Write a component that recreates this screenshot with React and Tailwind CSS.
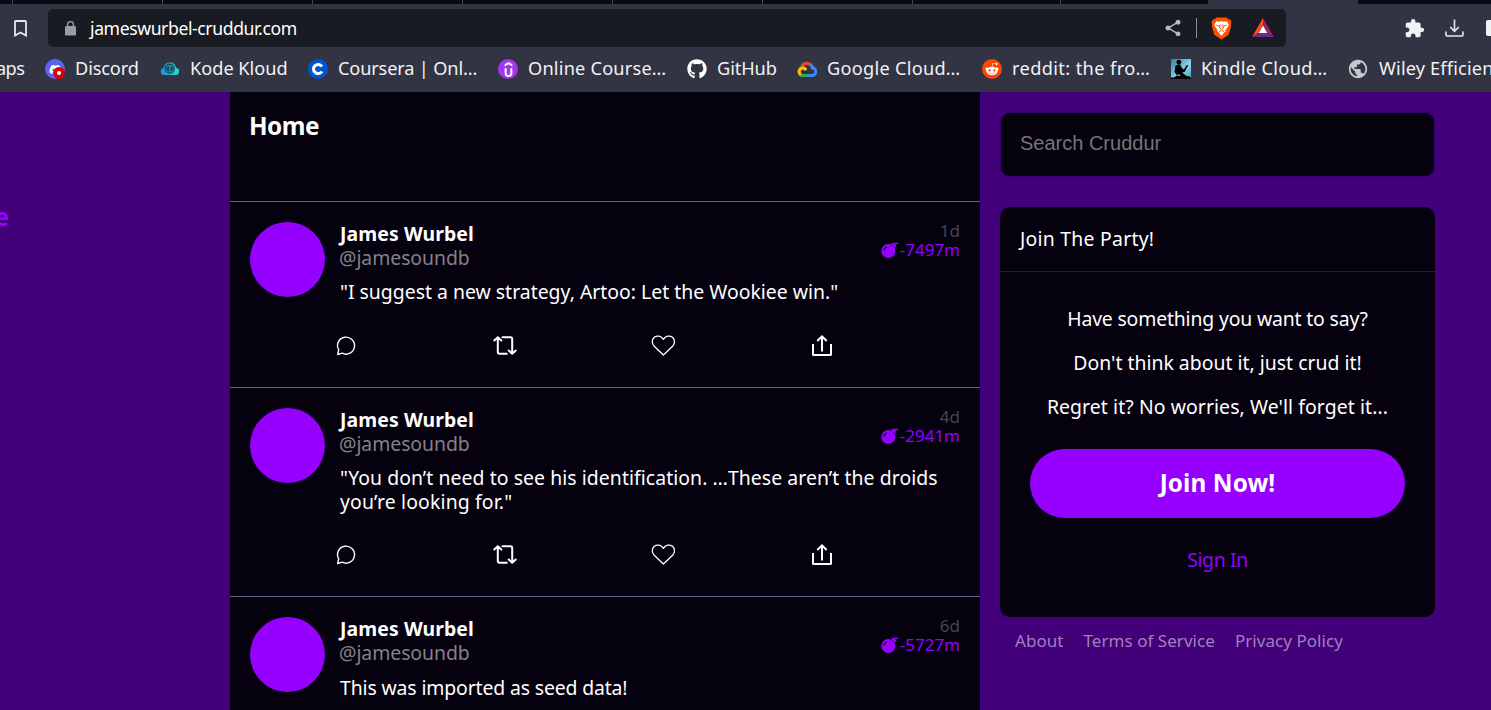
import React from 'react';
import { SiUdemy } from 'react-icons/si';
import { FaGithub, FaDiscord, FaRedditAlien } from 'react-icons/fa';
import { MdExtension, MdShare, MdPublic } from 'react-icons/md';

/* ---------- browser icons ---------- */

function DiscordIcon() {
  return (
    <span className="relative flex size-5 shrink-0 items-center justify-center rounded-full bg-[#5865f2]">
      <FaDiscord className="size-[13px] text-white" />
      <span className="absolute top-2 left-2 flex size-3 items-center justify-center rounded-full bg-[#dc0000]">
        <span className="size-1 rounded-full bg-white" />
      </span>
    </span>
  );
}

function KodeKloudIcon() {
  return (
    <svg className="size-5 shrink-0" viewBox="0 0 20 20">
      <defs>
        <linearGradient id="kk" x1="0" x2="1">
          <stop offset="0" stopColor="#1c8fe0" />
          <stop offset="1" stopColor="#2bdcc8" />
        </linearGradient>
      </defs>
      <path fill="url(#kk)" d="M4 16a3.700 3.700 0 0 1-.4-7.300A6.300 6.300 0 0 1 16 8.800 3.700 3.700 0 0 1 16.400 16z" />
      <circle cx="9.700" cy="9.700" r="4.500" fill="#1f7f9c" stroke="#1c4257" strokeWidth="1.200" />
      <path d="M8.800 8 7.300 9.700l1.500 1.700M10.700 8 12.200 9.700l-1.500 1.700" fill="none" stroke="#173246" strokeWidth="1.100" />
    </svg>
  );
}

function CourseraIcon() {
  return (
    <svg className="size-5 shrink-0" viewBox="0 0 20 20">
      <circle cx="10" cy="10" r="10" fill="#0056d2" />
      <path d="M14 7.500A4.600 4.600 0 1 0 14 12.500" fill="none" stroke="#fff" strokeWidth="3" />
    </svg>
  );
}

function UdemyIcon() {
  return (
    <span className="flex size-5 shrink-0 items-center justify-center rounded-full bg-[#a435f0]">
      <SiUdemy className="size-[15px] text-white" />
    </span>
  );
}

function GoogleCloudIcon() {
  return (
    <svg className="size-5 shrink-0" viewBox="0 0 20 20" fill="none" strokeWidth="3.200">
      <path d="M4.800 7.600A5.400 5.400 0 0 1 13.600 5.900" stroke="#ea4335" />
      <path d="M13.300 5.600C14.600 6.600 15.200 7.700 15.400 8.900A3.800 3.800 0 0 1 14.600 16.500H10" stroke="#4285f4" />
      <path d="M10.200 16.500H5.600C4.800 16.500 4 16.200 3.400 15.800" stroke="#34a853" />
      <path d="M3.900 16A3.900 3.900 0 0 1 5.400 8.900C7 8.900 8.300 9.800 9 11.200" stroke="#fbbc05" />
    </svg>
  );
}

function RedditIcon() {
  return (
    <span className="flex size-5 shrink-0 items-center justify-center rounded-full bg-[#ff4500]">
      <FaRedditAlien className="size-[14px] text-white" />
    </span>
  );
}

function KindleIcon() {
  return (
    <svg className="size-5 shrink-0" viewBox="0 0 20 20">
      <defs>
        <linearGradient id="kd" x1="0" y1="0" x2="1" y2="1">
          <stop offset="0" stopColor="#2a83a8" />
          <stop offset=".6" stopColor="#8fd3e8" />
          <stop offset="1" stopColor="#3d9cc0" />
        </linearGradient>
      </defs>
      <path fill="url(#kd)" d="M0 0h20v20H0z" />
      <circle cx="7.800" cy="3.200" r="2.400" />
      <path d="M4.500 6.500 8.800 5l2.200 4 1.800 1.500 3.200-4.800 1.100.7-3.500 6.600-2.400.4 4.300 3.600 3.500.5v1H20v2H0v-2h3l3-2L3.500 13z" />
      <path d="M7.500 15 6 16.800h4z" fill="#8fd3e8" />
    </svg>
  );
}

function BraveIcon() {
  return (
    <svg className="h-[23px] w-[21px]" viewBox="0 0 21 23">
      <path fill="#ff5000" d="M5.500.5h10l2 2 1.500-.2 1.500 3-.6 2.200.4 1-2.600 9.200L10.500 22.500 3.300 17.700.7 8.500l.4-1L.5 5.300l1.500-3 1.500.2z" />
      <path fill="#fff" d="M5.500 4.200l2.500.5 2.500-.5 2.500.5 2.500-.5 2.200 3-.6 2.300-2.700 3.500.4 1.700-2 .9-.7 1.700-1.600 1.200-1.600-1.200-.7-1.700-2-.9.4-1.700L3.900 9.500 3.300 7.200z" />
      <path fill="none" stroke="#ff5000" strokeWidth="1" d="M5.300 8.200l3 1M15.700 8.200l-3 1M9.200 7.500l-.6 3.500 1.900 1.300 1.900-1.300-.6-3.500M8 14.500l2.500-1 2.500 1" />
    </svg>
  );
}

function TokenIcon() {
  return (
    <svg className="h-[20px] w-[22px]" viewBox="0 0 22 20">
      <path d="M11 0v7l-4.400 8L0 19z" fill="#ff4724" />
      <path d="M11 0l11 19-6.600-4L11 7z" fill="#9e1f63" />
      <path d="M0 19l6.600-4h8.800L22 19z" fill="#662d91" />
      <path d="M11 7.500l4.300 7.500H6.700z" fill="#fff" />
    </svg>
  );
}

function LockIcon() {
  return (
    <svg className="h-[15px] w-[11px]" viewBox="0 0 11 15">
      <rect x="0" y="5" width="11" height="9.500" rx="1.300" fill="#9a9ca4" />
      <path d="M2.600 5.500V3.500a2.900 2.900 0 0 1 5.800 0v2" fill="none" stroke="#9a9ca4" strokeWidth="1.400" />
    </svg>
  );
}

/* ---------- browser chrome ---------- */

const BOOKMARKS = [
  { label: 'Discord', icon: <DiscordIcon />, width: 'w-[115px]', tracking: 'tracking-[-0.15px]' },
  { label: 'Kode Kloud', icon: <KodeKloudIcon />, width: 'w-[148px]', tracking: 'tracking-[-0.02px]' },
  { label: 'Coursera | Onl…', icon: <CourseraIcon />, width: 'w-[190px]', tracking: 'tracking-[-0.16px]' },
  { label: 'Online Course…', icon: <UdemyIcon />, width: 'w-[189px]', tracking: 'tracking-[0.2px]' },
  { label: 'GitHub', icon: <FaGithub className="size-5 shrink-0 text-white" />, width: 'w-[110px]', tracking: 'tracking-[-0.1px]' },
  { label: 'Google Cloud…', icon: <GoogleCloudIcon />, width: 'w-[185px]', tracking: 'tracking-[0.26px]' },
  { label: 'reddit: the fro…', icon: <RedditIcon />, width: 'w-[189px]', tracking: 'tracking-[0.38px]' },
  { label: 'Kindle Cloud…', icon: <KindleIcon />, width: 'w-[176px]', tracking: 'tracking-[0.34px]' },
  { label: 'Wiley Efficien', icon: <MdPublic className="size-[22px] shrink-0 text-[#c4c7cc]" />, width: 'w-[150px]', tracking: 'tracking-[0.15px]' },
];

function TabStrip() {
  return (
    <div className="flex h-1 shrink-0">
      <div className="w-[13px] border-r border-[#4a4a50] bg-[#0b0a14]" />
      {[0, 1, 2, 3, 4, 5].map((n) => (
        <div key={n} className="w-[150px] border-r border-[#4a4a50] bg-[#0b0a14]" />
      ))}
      <div className="w-[148px] border-r border-[#4a4a50] bg-[#0b0a14]" />
      <div className="w-[147px] bg-[#0b0a14]" />
      <div className="w-[150px]" />
      <div className="flex-1 bg-[#0b0a14]" />
    </div>
  );
}

function BrowserChrome() {
  return (
    <header className="flex h-[92px] shrink-0 flex-col bg-[#323443] text-[#f1f2f4]">
      <TabStrip />
      <div className="flex h-12 shrink-0 items-center">
        <svg className="ml-[14px] h-[17px] w-[13px] shrink-0" viewBox="0 0 13 17" fill="none" stroke="#e8e8ea" strokeWidth="1.800">
          <path d="M1 1.900Q1 1 1.900 1H11.100Q12 1 12 1.900V15.500L6.500 12.500 1 15.500z" />
        </svg>
        <div className="ml-[21px] flex h-[38px] w-[1238px] shrink-0 items-center rounded-[5px] bg-[#181b22] pl-[17px]">
          <LockIcon />
          <span className="ml-[14px] pb-px text-[17.6px] leading-6 tracking-[-0.4px] text-white">jameswurbel-cruddur.com</span>
          <div className="ml-auto flex items-center">
            <MdShare className="size-5 text-[#b9bbc0]" />
            <span className="ml-[13px] h-5 w-px bg-[#8b8d93]" />
            <span className="ml-[14px]"><BraveIcon /></span>
            <span className="mr-[12px] ml-[20px]"><TokenIcon /></span>
          </div>
        </div>
        <MdExtension className="ml-[118px] size-[21px] shrink-0 text-[#f1f2f4]" />
        <svg className="ml-[20px] h-[19px] w-[19px] shrink-0" viewBox="0 0 19 19" fill="none" stroke="#e8e8ea" strokeWidth="1.600">
          <path d="M9.500.5v11.500M5.200 8l4.300 4.300L13.800 8M1 12.500v3.500q0 1 1 1h15q1 0 1-1v-3.500" />
        </svg>
        <span className="ml-[22px] h-4 w-[5px] shrink-0 rounded-l-[2px] bg-[#f1f2f4]" />
      </div>
      <nav className="flex h-[34px] items-center overflow-hidden text-[18.2px] leading-6 whitespace-nowrap">
        <span className="flex w-[45px] shrink-0 pb-0.5"><span className="-ml-[4px] tracking-[-0.6px]">aps</span></span>
        {BOOKMARKS.map((b) => (
          <span key={b.label} className={`flex shrink-0 items-center gap-[10px] ${b.width}`}>
            {b.icon}
            <span className={`pb-0.5 ${b.tracking}`}>{b.label}</span>
          </span>
        ))}
      </nav>
    </header>
  );
}

/* ---------- feed ---------- */

function ReplyIcon() {
  return (
    <svg className="size-6" viewBox="0 0 24 24" fill="none" stroke="#fff" strokeWidth="1.400">
      <path d="M3.700 21.500L4.700 16.900A8.500 8.500 0 1 1 8.200 20.200z" strokeLinejoin="round" />
    </svg>
  );
}

function RepostIcon() {
  return (
    <svg className="size-6" viewBox="0 0 24 24" fill="none" stroke="#fff" strokeWidth="2" strokeLinecap="round" strokeLinejoin="round">
      <path d="M1.300 7.500L4.800 4.200l3.500 3.300M4.800 4.600V18.800Q4.800 20.800 6.500 20.800H13.800" />
      <path d="M9.500 4.300H17.500Q19.200 4.300 19.200 6V20.500M15.700 17.500l3.500 3.300 3.500-3.300" />
    </svg>
  );
}

function HeartIcon() {
  return (
    <svg className="size-6" viewBox="0 0 24 24" fill="none" stroke="#fff" strokeWidth="1.300" strokeLinejoin="round">
      <path d="M12.400 22L3.200 13.200C.6 10.400.7 6.500 3.300 4.300 6.100 2.200 10.400 2.700 12.400 6.400 14.400 2.700 18.700 2.200 21.500 4.300 24.100 6.500 24.200 10.400 21.600 13.200z" />
    </svg>
  );
}

function ShareIcon() {
  return (
    <svg className="size-6" viewBox="0 0 24 24" fill="none" stroke="#fff" strokeWidth="2">
      <path d="M3 11v10.500q0 .5.500.5h17q.5 0 .5-.5V11M12 18.500V3.500" />
      <path d="M7.300 8L12 3.300 16.700 8" />
    </svg>
  );
}

function BombIcon() {
  return (
    <svg className="h-4 w-[18px]" viewBox="0 0 18 16">
      <circle cx="7.300" cy="9" r="7" fill="#9500ff" />
      <path d="M9.500 1.800l4.700 3.800 1.300-2L12 .8z" fill="#9500ff" />
      <path d="M12.500 2.300Q14.500.6 17 1.600" stroke="#9500ff" strokeWidth="1.500" fill="none" />
      <path d="M3 8.500Q3.300 5.800 6 5" stroke="#14002a" strokeWidth="1.300" fill="none" />
    </svg>
  );
}

const POSTS = [
  {
    lines: [{ text: '"I suggest a new strategy, Artoo: Let the Wookiee win."', tracking: 'tracking-[0.01px]' }],
    age: '1d',
    expires: '-7497m',
  },
  {
    lines: [
      { text: '"You don’t need to see his identification. …These aren’t the droids', tracking: 'tracking-[0.07px]' },
      { text: 'you’re looking for."', tracking: 'tracking-[0.15px]' },
    ],
    age: '4d',
    expires: '-2941m',
  },
  {
    lines: [{ text: 'This was imported as seed data!', tracking: 'tracking-[-0.13px]' }],
    age: '6d',
    expires: '-5727m',
  },
];

function Post({ post }) {
  return (
    <article className="flex shrink-0 gap-[15px] border-t border-[#605e88] px-5 pt-5 pb-[30px]">
      <div className="size-[75px] shrink-0 rounded-full bg-[#9500ff]" />
      <div className="flex flex-1 flex-col">
        <div className="flex h-12 justify-between">
          <div className="text-[19.4px] leading-6">
            <div className="font-bold tracking-[0.1px] text-white">James Wurbel</div>
            <div className="-ml-px tracking-[-0.05px] text-[#838187]">@jamesoundb</div>
          </div>
          <div className="-mt-px flex flex-col items-end text-[17px] leading-[19px]">
            <span className="text-[#434753]">{post.age}</span>
            <span className="flex items-center gap-[1px] text-[#9500ff]">
              <BombIcon />
              {post.expires}
            </span>
          </div>
        </div>
        <div className="mt-[10.300px] text-[19.4px] leading-[23.400px] whitespace-nowrap text-white">
          {post.lines.map((l) => (
            <p key={l.text} className={l.tracking}>{l.text}</p>
          ))}
        </div>
        <div className="mt-[29.300px] -ml-[6px] flex">
          <span className="w-[158.600px]"><ReplyIcon /></span>
          <span className="w-[158.600px]"><RepostIcon /></span>
          <span className="w-[158.600px]"><HeartIcon /></span>
          <span><ShareIcon /></span>
        </div>
      </div>
    </article>
  );
}

function Feed() {
  return (
    <main className="flex w-[750px] shrink-0 flex-col overflow-hidden bg-[#06010f]">
      <div className="h-[109px] shrink-0 px-[19px] pt-[18px] text-[24.3px] leading-8 font-bold tracking-[-0.5px] text-white">Home</div>
      {POSTS.map((p) => (
        <Post key={p.expires} post={p} />
      ))}
    </main>
  );
}

/* ---------- right sidebar ---------- */

function Sidebar() {
  return (
    <aside className="flex flex-1 flex-col px-5 pt-5">
      <div className="flex h-[65px] w-[435px] items-center rounded-[10px] border border-[#35006a] bg-[#06010f] px-[19px] pb-[3px] font-['Liberation_Sans',sans-serif] text-[20px] text-[#757575]">
        Search Cruddur
      </div>
      <section className="mt-[30px] flex h-[410px] w-[435px] flex-col rounded-[10px] bg-[#06010f] text-[19.4px] leading-6 text-white">
        <h2 className="h-[65px] border-b border-[#1f2430] px-5 pt-5 tracking-[0.25px]">Join The Party!</h2>
        <div className="flex flex-col items-center gap-5 pt-[35px] whitespace-nowrap">
          <p className="tracking-[-0.16px]">Have something you want to say?</p>
          <p className="tracking-[0.01px]">Don't think about it, just crud it!</p>
          <p className="tracking-[0.09px]">Regret it? No worries, We'll forget it...</p>
        </div>
        <button className="mx-[30px] mt-[30px] h-[69px] shrink-0 rounded-full bg-[#9500ff] pb-px text-[24.3px] font-bold tracking-[0.1px]">Join Now!</button>
        <a className="mt-[30px] text-center tracking-[-0.35px] text-[#9500ff]">Sign In</a>
      </section>
      <footer className="flex gap-5 pt-3 pl-[15px] text-[17px] leading-6 tracking-[0.05px] whitespace-nowrap text-[#a080bd]">
        <a>About</a>
        <a>Terms of Service</a>
        <a>Privacy Policy</a>
      </footer>
    </aside>
  );
}

export default function App() {
  return (
    <div className="flex h-[710px] w-[1491px] flex-col overflow-hidden bg-[#42007b] font-['Noto_Sans',sans-serif]">
      <BrowserChrome />
      <div className="flex min-h-0 flex-1">
        <div className="w-[230px] shrink-0 pt-[109px]">
          <div className="flex w-[9px] justify-end overflow-hidden text-[24.3px] leading-8 font-bold text-[#9500ff]">e</div>
        </div>
        <Feed />
        <Sidebar />
      </div>
    </div>
  );
}
